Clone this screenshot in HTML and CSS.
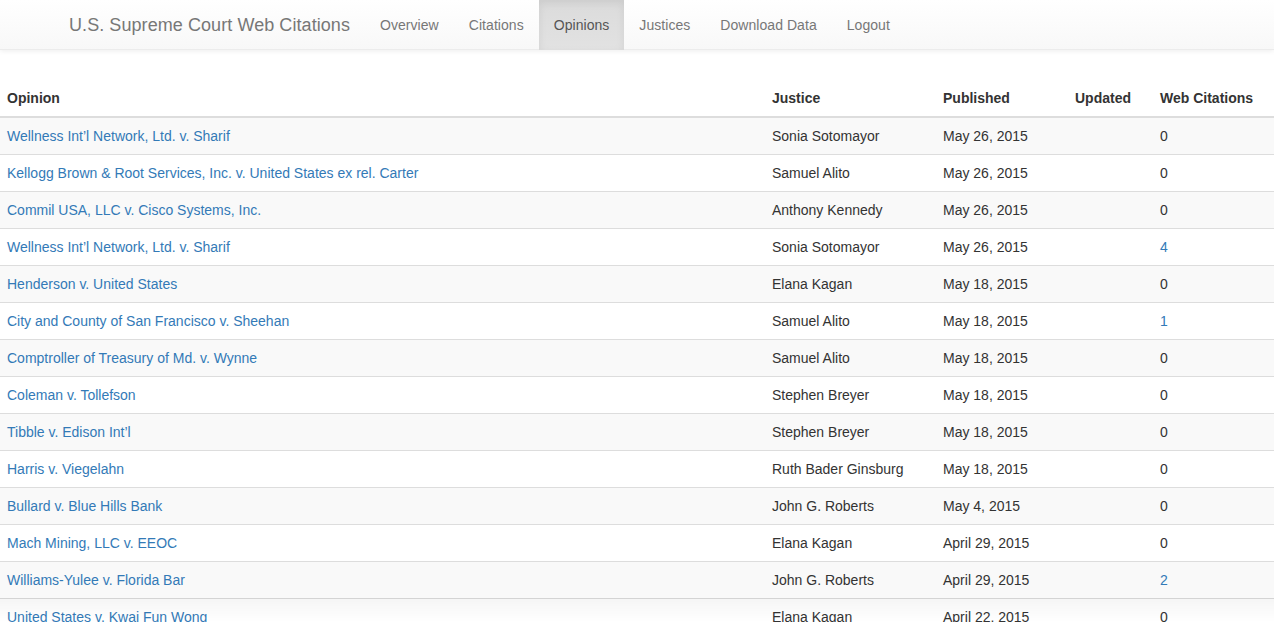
FILE: index.html
```html
<!DOCTYPE html>
<html>
<head>
<meta charset="utf-8">
<title>U.S. Supreme Court Web Citations</title>
<link rel="stylesheet" href="styles.css">
</head>
<body>
<nav class="navbar">
  <div class="container">
    <a class="brand" href="#">U.S. Supreme Court Web Citations</a>
    <ul class="nav">
      <li><a href="#">Overview</a></li>
      <li><a href="#">Citations</a></li>
      <li class="active"><a href="#">Opinions</a></li>
      <li><a href="#">Justices</a></li>
      <li><a href="#">Download Data</a></li>
      <li><a href="#">Logout</a></li>
    </ul>
  </div>
</nav>
<table class="table">
  <thead>
    <tr>
      <th class="c-op">Opinion</th>
      <th class="c-ju">Justice</th>
      <th class="c-pu">Published</th>
      <th class="c-up">Updated</th>
      <th class="c-wc">Web Citations</th>
    </tr>
  </thead>
  <tbody>
    <tr><td><a href="#">Wellness Int’l Network, Ltd. v. Sharif</a></td><td>Sonia Sotomayor</td><td>May 26, 2015</td><td></td><td>0</td></tr>
    <tr><td><a href="#">Kellogg Brown &amp; Root Services, Inc. v. United States ex rel. Carter</a></td><td>Samuel Alito</td><td>May 26, 2015</td><td></td><td>0</td></tr>
    <tr><td><a href="#">Commil USA, LLC v. Cisco Systems, Inc.</a></td><td>Anthony Kennedy</td><td>May 26, 2015</td><td></td><td>0</td></tr>
    <tr><td><a href="#">Wellness Int’l Network, Ltd. v. Sharif</a></td><td>Sonia Sotomayor</td><td>May 26, 2015</td><td></td><td><a href="#">4</a></td></tr>
    <tr><td><a href="#">Henderson v. United States</a></td><td>Elana Kagan</td><td>May 18, 2015</td><td></td><td>0</td></tr>
    <tr><td><a href="#">City and County of San Francisco v. Sheehan</a></td><td>Samuel Alito</td><td>May 18, 2015</td><td></td><td><a href="#">1</a></td></tr>
    <tr><td><a href="#">Comptroller of Treasury of Md. v. Wynne</a></td><td>Samuel Alito</td><td>May 18, 2015</td><td></td><td>0</td></tr>
    <tr><td><a href="#">Coleman v. Tollefson</a></td><td>Stephen Breyer</td><td>May 18, 2015</td><td></td><td>0</td></tr>
    <tr><td><a href="#">Tibble v. Edison Int’l</a></td><td>Stephen Breyer</td><td>May 18, 2015</td><td></td><td>0</td></tr>
    <tr><td><a href="#">Harris v. Viegelahn</a></td><td>Ruth Bader Ginsburg</td><td>May 18, 2015</td><td></td><td>0</td></tr>
    <tr><td><a href="#">Bullard v. Blue Hills Bank</a></td><td>John G. Roberts</td><td>May 4, 2015</td><td></td><td>0</td></tr>
    <tr><td><a href="#">Mach Mining, LLC v. EEOC</a></td><td>Elana Kagan</td><td>April 29, 2015</td><td></td><td>0</td></tr>
    <tr><td><a href="#">Williams-Yulee v. Florida Bar</a></td><td>John G. Roberts</td><td>April 29, 2015</td><td></td><td><a href="#">2</a></td></tr>
    <tr><td><a href="#">United States v. Kwai Fun Wong</a></td><td>Elana Kagan</td><td>April 22, 2015</td><td></td><td>0</td></tr>
  </tbody>
</table>
<div class="bottom-shade"></div>
</body>
</html>
```

FILE: styles.css
```css
* { box-sizing: border-box; }
html, body { margin: 0; padding: 0; }
body {
  font-family: "Liberation Sans", Arial, Helvetica, sans-serif;
  font-size: 14px;
  line-height: 20px;
  color: #333;
  background: #fff;
  overflow: hidden;
}
a { color: #337ab7; text-decoration: none; }

.navbar {
  height: 50px;
  margin-bottom: 30px;
  background: linear-gradient(to bottom, #ffffff 0%, #f8f8f8 100%);
  border-bottom: 1px solid #ececec;
  box-shadow: inset 0 1px 0 rgba(255,255,255,.15), 0 1px 5px rgba(0,0,0,.075);
}
.container {
  width: 1170px;
  margin: 0 auto;
  padding: 0 15px;
  display: flex;
  height: 50px;
}
.brand {
  display: block;
  height: 50px;
  padding: 15px;
  margin-left: -13px;
  font-size: 18px;
  line-height: 20px;
  letter-spacing: 0.07px;
  color: #777;
}
.nav {
  list-style: none;
  margin: 0;
  padding: 0;
  display: flex;
}
.nav li a {
  display: block;
  padding: 15px;
  line-height: 20px;
  height: 50px;
  color: #777;
  letter-spacing: 0.05px;
}
.nav li.active a {
  color: #555;
  background: linear-gradient(to bottom, #dbdbdb 0%, #e2e2e2 100%);
  box-shadow: inset 0 3px 9px rgba(0,0,0,.075);
}

.table {
  width: 100%;
  border-collapse: collapse;
  border-spacing: 0;
}
.table th, .table td {
  padding: 8px;
  text-align: left;
  vertical-align: top;
  line-height: 20px;
}
.table th:first-child, .table td:first-child { padding-left: 7px; }
.table th {
  font-weight: bold;
  border-bottom: 2px solid #ddd;
}
.table td { border-top: 1px solid #ddd; }
.table tbody tr:nth-child(odd) { background: #f9f9f9; }
.c-op { width: 764px; }
.c-ju { width: 171px; }
.c-pu { width: 132px; }
.c-up { width: 85px; }
.c-wc { width: 122px; }

.bottom-shade {
  position: fixed;
  left: 0;
  right: 0;
  bottom: 0;
  height: 24px;
  background: linear-gradient(to bottom, rgba(0,0,0,0.04), rgba(0,0,0,0));
  pointer-events: none;
}
```
